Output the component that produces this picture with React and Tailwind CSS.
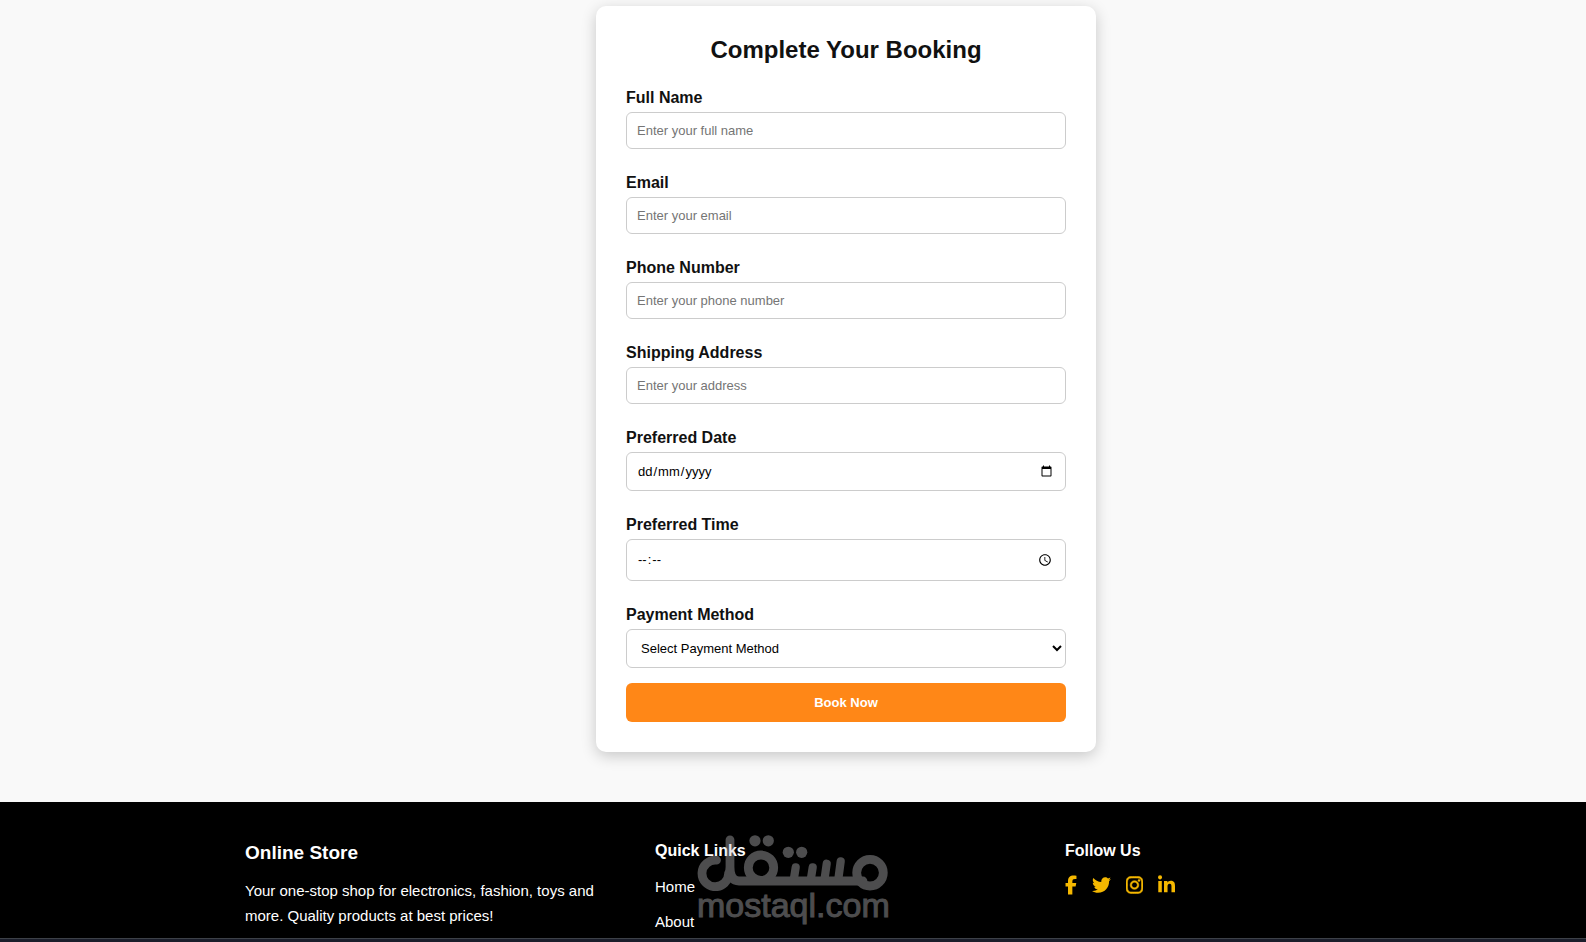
import { FaFacebookF, FaTwitter, FaInstagram, FaLinkedinIn } from "react-icons/fa6";

const controlClass =
  "block w-full rounded-md border border-[#cccccc] bg-white px-[10px] text-[13px] text-black placeholder:text-[#757575]";

// day / month / year, whatever order the browser locale uses
const dateOrderClass =
  "[&::-webkit-datetime-edit-fields-wrapper]:grid [&::-webkit-datetime-edit-fields-wrapper]:grid-cols-[repeat(5,max-content)] [&::-webkit-datetime-edit-day-field]:col-start-1 [&::-webkit-datetime-edit-day-field]:row-start-1 [&::-webkit-datetime-edit-month-field]:col-start-3 [&::-webkit-datetime-edit-month-field]:row-start-1 [&::-webkit-datetime-edit-year-field]:col-start-5 [&::-webkit-datetime-edit-year-field]:row-start-1";

const textFields = [
  { id: "name", label: "Full Name", type: "text", placeholder: "Enter your full name" },
  { id: "email", label: "Email", type: "email", placeholder: "Enter your email" },
  { id: "phone", label: "Phone Number", type: "tel", placeholder: "Enter your phone number" },
  { id: "address", label: "Shipping Address", type: "text", placeholder: "Enter your address" },
];

function Field({ id, label, children }) {
  return (
    <div className="pt-2.5">
      <label htmlFor={id} className="mb-[5px] block text-base leading-[18px] font-bold">
        {label}
      </label>
      {children}
    </div>
  );
}

function BookingForm() {
  return (
    <form className="flex w-full max-w-[500px] flex-col gap-[15px] rounded-[10px] bg-white p-[30px] shadow-[0_4px_15px_rgba(0,0,0,0.2)]">
      <h2 className="text-center text-2xl leading-[28px] font-bold">Complete Your Booking</h2>
      {textFields.map(({ id, label, type, placeholder }) => (
        <Field key={id} id={id} label={label}>
          <input id={id} type={type} placeholder={placeholder} className={`${controlClass} h-[37px]`} />
        </Field>
      ))}
      <Field id="date" label="Preferred Date">
        <input id="date" type="date" className={`${controlClass} ${dateOrderClass} h-[39px]`} />
      </Field>
      <Field id="time" label="Preferred Time">
        <input
          id="time"
          type="time"
          className={`${controlClass} h-[42px] [&::-webkit-datetime-edit-ampm-field]:hidden`}
        />
      </Field>
      <Field id="payment" label="Payment Method">
        <select id="payment" className={`${controlClass} h-[39px]`}>
          <option>Select Payment Method</option>
          <option>Cash on Delivery</option>
          <option>Credit Card</option>
        </select>
      </Field>
      <button type="button" className="h-[39px] rounded-md bg-[#ff8717] text-[13px] font-bold text-white">
        Book Now
      </button>
    </form>
  );
}

function Watermark() {
  return (
    <div className="pointer-events-none absolute top-[33px] left-[697px] w-48 text-[#c0c0c4] opacity-40">
      <svg viewBox="0 0 192 56" className="block h-14 w-48" fill="none" stroke="currentColor" strokeLinecap="round" strokeLinejoin="round">
        <path strokeWidth="8.8" d="M19.5 25.2A13.3 13.3 0 1 0 31.6 38.5Q33 36 33 32V4.8M33 32Q33 46 42 46H166" />
        <circle cx="64" cy="32.7" r="12.7" strokeWidth="8.8" />
        <circle cx="173" cy="37.7" r="13.3" strokeWidth="8.8" />
        <path strokeWidth="8.2" d="M98.7 32.4L96.7 45M115.7 32.4L113.7 45M129.7 28.7L127.4 45M143.7 26.4L141.2 45" />
        <g fill="currentColor" stroke="none">
          <circle cx="58" cy="5.8" r="5.6" />
          <circle cx="71.3" cy="5.8" r="5.6" />
          <circle cx="91.3" cy="17.3" r="5.6" />
          <circle cx="104.7" cy="17.3" r="5.6" />
        </g>
      </svg>
      <p className="text-[34px] leading-7 [-webkit-text-stroke:1px_currentColor]">mostaql.com</p>
    </div>
  );
}

function Footer() {
  return (
    <footer className="relative min-h-0 flex-1 overflow-hidden bg-black pt-[39px] pl-[104px] text-[15px] text-white">
      <div className="mx-auto grid max-w-[1200px] grid-cols-3 gap-[30px]">
        <div>
          <h3 className="mb-[13px] text-[19px] leading-6 font-bold">Online Store</h3>
          <p className="leading-[25px]">
            Your one-stop shop for electronics, fashion, toys and more. Quality products at best prices!
          </p>
        </div>
        <div>
          <h4 className="mb-[13px] text-base leading-5 font-bold">Quick Links</h4>
          <ul className="flex flex-col gap-2.5 leading-[25px]">
            <li><a href="#home">Home</a></li>
            <li><a href="#about">About</a></li>
          </ul>
        </div>
        <div>
          <h4 className="mb-3.5 text-base leading-5 font-bold">Follow Us</h4>
          <div className="flex gap-[15px] text-[#f5b800]">
            <a href="#facebook" aria-label="Facebook"><FaFacebookF className="h-5 w-3" /></a>
            <a href="#twitter" aria-label="Twitter"><FaTwitter className="h-5 w-[19px]" /></a>
            <a href="#instagram" aria-label="Instagram"><FaInstagram className="h-5 w-[17px] stroke-current stroke-[14]" /></a>
            <a href="#linkedin" aria-label="LinkedIn"><FaLinkedinIn className="h-5 w-[17px]" /></a>
          </div>
        </div>
      </div>
      <Watermark />
    </footer>
  );
}

export default function App() {
  return (
    <div className="flex h-screen flex-col overflow-hidden bg-[#f9f9f9] font-['Liberation_Sans',Arial,sans-serif] text-[#111111]">
      <main className="flex shrink-0 justify-center pt-1.5 pb-[50px] pl-[106px]">
        <BookingForm />
      </main>
      <Footer />
      <div className="h-1 shrink-0 border-t border-[#3d4148] bg-[#1b1e2b]" />
    </div>
  );
}
